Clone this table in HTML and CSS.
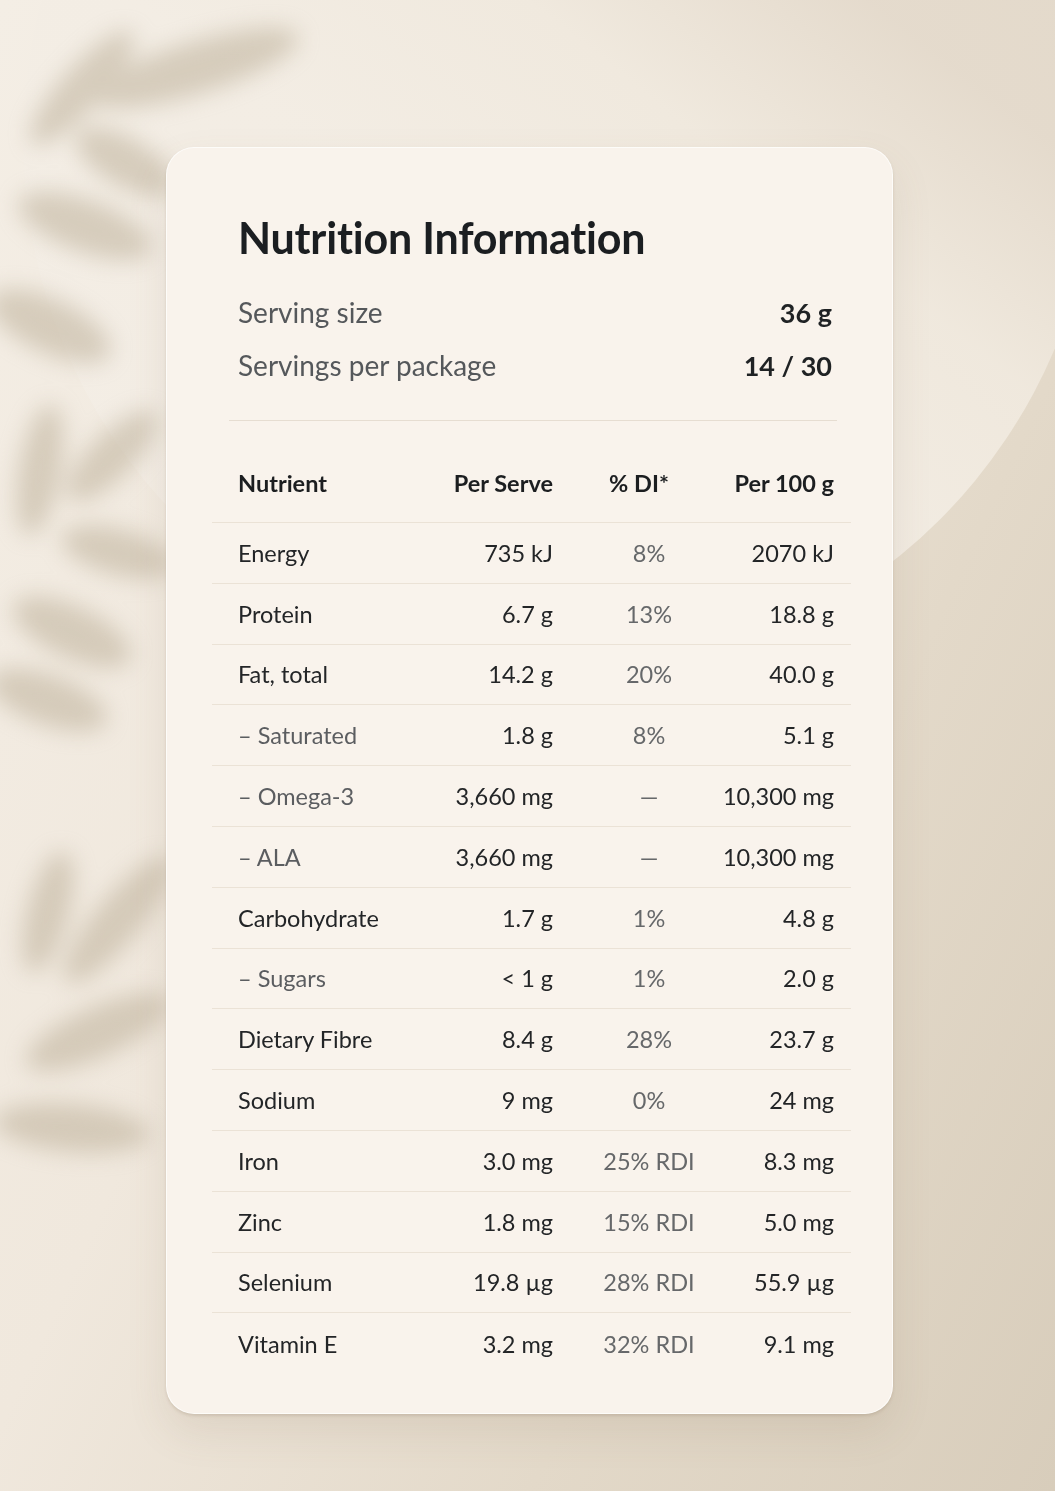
FILE: index.html
```html
<!DOCTYPE html>
<html lang="en">
<head>
<meta charset="utf-8">
<title>Nutrition Information</title>
<link rel="stylesheet" href="styles.css">
</head>
<body>
<div class="scene">
  <div class="bg-circle"></div>
  <svg class="leaves" width="380" height="1300" viewBox="0 0 380 1300" aria-hidden="true">
    <defs>
      <filter id="soft" x="-50%" y="-50%" width="200%" height="200%">
        <feGaussianBlur stdDeviation="11"/>
      </filter>
    </defs>
    <g filter="url(#soft)" fill="#b9ac94" opacity="0.5">
      <ellipse cx="195" cy="68" rx="108" ry="26" transform="rotate(-17 195 68)"/>
      <ellipse cx="82" cy="88" rx="74" ry="21" transform="rotate(-48 82 88)"/>
      <ellipse cx="125" cy="162" rx="55" ry="24" transform="rotate(30 125 162)"/>
      <ellipse cx="85" cy="226" rx="70" ry="26" transform="rotate(20 85 226)"/>
      <ellipse cx="50" cy="326" rx="66" ry="27" transform="rotate(25 50 326)"/>
      <ellipse cx="40" cy="470" rx="66" ry="21" transform="rotate(-80 40 470)"/>
      <ellipse cx="112" cy="456" rx="60" ry="22" transform="rotate(-45 112 456)"/>
      <ellipse cx="118" cy="552" rx="58" ry="23" transform="rotate(15 118 552)"/>
      <ellipse cx="72" cy="632" rx="64" ry="26" transform="rotate(25 72 632)"/>
      <ellipse cx="48" cy="700" rx="62" ry="25" transform="rotate(20 48 700)"/>
      <ellipse cx="48" cy="912" rx="62" ry="21" transform="rotate(-75 48 912)"/>
      <ellipse cx="118" cy="920" rx="80" ry="23" transform="rotate(-50 118 920)"/>
      <ellipse cx="98" cy="1032" rx="78" ry="25" transform="rotate(-24 98 1032)"/>
      <ellipse cx="72" cy="1128" rx="78" ry="24" transform="rotate(5 72 1128)"/>
    </g>
  </svg>

  <main class="card">
    <h1 class="title">Nutrition Information</h1>

    <section class="summary">
      <div class="summary-row">
        <span class="summary-label">Serving size</span>
        <span class="summary-value">36 g</span>
      </div>
      <div class="summary-row">
        <span class="summary-label">Servings per package</span>
        <span class="summary-value">14 / 30</span>
      </div>
    </section>

    <div class="facts">
      <div class="row head">
        <span class="c-name">Nutrient</span>
        <span class="c-serve">Per Serve</span>
        <span class="c-di">% DI*</span>
        <span class="c-100">Per 100 g</span>
      </div>
      <div class="row">
        <span class="c-name">Energy</span>
        <span class="c-serve">735 kJ</span>
        <span class="c-di">8%</span>
        <span class="c-100">2070 kJ</span>
      </div>
      <div class="row">
        <span class="c-name">Protein</span>
        <span class="c-serve">6.7 g</span>
        <span class="c-di">13%</span>
        <span class="c-100">18.8 g</span>
      </div>
      <div class="row">
        <span class="c-name">Fat, total</span>
        <span class="c-serve">14.2 g</span>
        <span class="c-di">20%</span>
        <span class="c-100">40.0 g</span>
      </div>
      <div class="row sub">
        <span class="c-name">– Saturated</span>
        <span class="c-serve">1.8 g</span>
        <span class="c-di">8%</span>
        <span class="c-100">5.1 g</span>
      </div>
      <div class="row sub">
        <span class="c-name">– Omega-3</span>
        <span class="c-serve">3,660 mg</span>
        <span class="c-di">—</span>
        <span class="c-100">10,300 mg</span>
      </div>
      <div class="row sub">
        <span class="c-name">– ALA</span>
        <span class="c-serve">3,660 mg</span>
        <span class="c-di">—</span>
        <span class="c-100">10,300 mg</span>
      </div>
      <div class="row">
        <span class="c-name">Carbohydrate</span>
        <span class="c-serve">1.7 g</span>
        <span class="c-di">1%</span>
        <span class="c-100">4.8 g</span>
      </div>
      <div class="row sub">
        <span class="c-name">– Sugars</span>
        <span class="c-serve">&lt; 1 g</span>
        <span class="c-di">1%</span>
        <span class="c-100">2.0 g</span>
      </div>
      <div class="row">
        <span class="c-name">Dietary Fibre</span>
        <span class="c-serve">8.4 g</span>
        <span class="c-di">28%</span>
        <span class="c-100">23.7 g</span>
      </div>
      <div class="row">
        <span class="c-name">Sodium</span>
        <span class="c-serve">9 mg</span>
        <span class="c-di">0%</span>
        <span class="c-100">24 mg</span>
      </div>
      <div class="row">
        <span class="c-name">Iron</span>
        <span class="c-serve">3.0 mg</span>
        <span class="c-di">25% RDI</span>
        <span class="c-100">8.3 mg</span>
      </div>
      <div class="row">
        <span class="c-name">Zinc</span>
        <span class="c-serve">1.8 mg</span>
        <span class="c-di">15% RDI</span>
        <span class="c-100">5.0 mg</span>
      </div>
      <div class="row">
        <span class="c-name">Selenium</span>
        <span class="c-serve">19.8 µg</span>
        <span class="c-di">28% RDI</span>
        <span class="c-100">55.9 µg</span>
      </div>
      <div class="row last">
        <span class="c-name">Vitamin E</span>
        <span class="c-serve">3.2 mg</span>
        <span class="c-di">32% RDI</span>
        <span class="c-100">9.1 mg</span>
      </div>
    </div>
  </main>
</div>
</body>
</html>
```
FILE: styles.css
```css
* { box-sizing: border-box; }

html, body {
  margin: 0;
  padding: 0;
}

body {
  width: 1055px;
  min-height: 1491px;
  font-family: "Lato", "Noto Sans", "Liberation Sans", sans-serif;
  color: #222426;
  background: linear-gradient(115deg, #f4eee5 0%, #f0e8dd 38%, #e3d9c9 70%, #d8cdbb 100%);
  overflow: hidden;
}

.scene {
  position: relative;
  width: 1055px;
  height: 1491px;
  padding-top: 147px;
  overflow: hidden;
}

.bg-circle {
  position: absolute;
  left: 23px;
  top: -397px;
  width: 1074px;
  height: 1074px;
  border-radius: 50%;
  background: linear-gradient(218deg,
    rgba(226, 216, 200, 0.95) 0%,
    rgba(228, 218, 204, 0.92) 30%,
    rgba(240, 233, 222, 0.95) 44%,
    rgba(243, 237, 228, 0.95) 60%,
    rgba(244, 238, 230, 0.8) 100%);
}

.leaves {
  position: absolute;
  left: 0;
  top: 0;
}

.card {
  position: relative;
  width: 727px;
  height: 1267px;
  margin-left: 166px;
  padding: 68px 41px 0 45px;
  background: #f9f3ec;
  border-radius: 28px;
  border: 1px solid rgba(255, 255, 255, 0.7);
  box-shadow: 0 2px 3px rgba(120, 100, 70, 0.18), 0 18px 40px rgba(120, 100, 70, 0.12);
}

.title {
  margin: 0 0 0 26px;
  font-size: 43px;
  line-height: 44px;
  font-weight: 700;
  color: #1b1e21;
  letter-spacing: -0.2px;
}

.summary {
  margin: 26px 14px 0 17px;
  padding: 0 5px 28px 9px;
  border-bottom: 1px solid #e6ddd1;
}

.summary-row {
  display: flex;
  justify-content: space-between;
  align-items: baseline;
  height: 53px;
  line-height: 53px;
}

.summary-label {
  font-size: 28px;
  color: #55585b;
}

.summary-value {
  font-size: 27px;
  font-weight: 700;
  color: #1f2224;
}

.facts {
  margin-top: 22px;
}

.row {
  display: grid;
  grid-template-columns: 163px 152px 160px 121px;
  align-items: center;
  height: 60.8px;
  padding: 0 19px 0 26px;
  border-bottom: 1px solid #ebe2d6;
  font-size: 23.5px;
  color: #232527;
}

.row.head {
  height: 80px;
  font-weight: 700;
  color: #1c1e20;
}

.row.last {
  border-bottom: none;
}

.c-name { text-align: left; white-space: nowrap; }
.c-serve { text-align: right; white-space: nowrap; }
.c-di {
  text-align: center;
  padding-left: 32px;
  white-space: nowrap;
  color: #66686a;
}
.row.head .c-di {
  color: #1c1e20;
  padding-left: 12px;
  padding-right: 0;
}
.c-100 { text-align: right; white-space: nowrap; }

.row.sub .c-name { color: #5b5d60; }
```
